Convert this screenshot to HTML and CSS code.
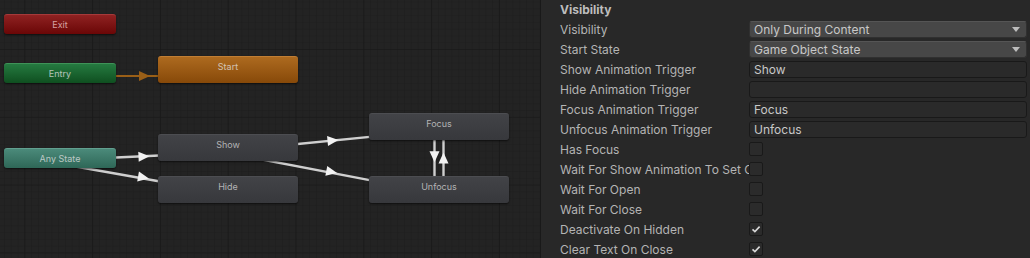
FILE: index.html
```html
<!DOCTYPE html>
<html lang="en">
<head>
    <meta charset="UTF-8">
    <title>Animator - Visibility</title>
    <link rel="stylesheet" href="styles.css">
</head>
<body>
    <div class="window">
        <div class="graph">
            <svg class="graph-lines" width="540" height="258" viewBox="0 0 540 258">
                <defs>
                    <pattern id="minor" width="6.78" height="6.78" x="24.3" y="-18.8" patternUnits="userSpaceOnUse">
                        <path d="M0 0 V6.78 M0 0 H6.78" stroke="#1d1d1d" stroke-width="1" fill="none"/>
                    </pattern>
                    <pattern id="major" width="67.8" height="67.8" x="24.3" y="-18.8" patternUnits="userSpaceOnUse">
                        <path d="M0 0 V67.8 M0 0 H67.8" stroke="#171717" stroke-width="1.2" fill="none"/>
                    </pattern>
                </defs>
                <rect width="540" height="258" fill="#232323"/>
                <rect width="540" height="258" fill="url(#minor)"/>
                <rect width="540" height="258" fill="url(#major)"/>

                <!-- transitions -->
                <line x1="100" y1="76" x2="170" y2="76" stroke="#9a5f17" stroke-width="2.2"/>
                <g stroke="#cfcfcf" stroke-width="2.4">
                    <line x1="100" y1="158.3" x2="170" y2="155"/>
                    <line x1="60" y1="163.7" x2="170" y2="183.2"/>
                    <line x1="280" y1="145.8" x2="380" y2="135.9"/>
                    <line x1="250" y1="157.2" x2="380" y2="182.1"/>
                    <line x1="434.5" y1="130" x2="434.5" y2="190"/>
                    <line x1="443.5" y1="130" x2="443.5" y2="190"/>
                </g>
                <polygon points="-5.5,-5 5.5,0 -5.5,5" fill="#9a5f17" transform="translate(144.5 76)"/>
                <g fill="#f2f2f2">
                    <polygon points="-5.5,-5 5.5,0 -5.5,5" transform="translate(144 156.6) rotate(-2.7)"/>
                    <polygon points="-5.5,-5 5.5,0 -5.5,5" transform="translate(143.5 177.5) rotate(10.1)"/>
                    <polygon points="-5.5,-5 5.5,0 -5.5,5" transform="translate(333 140.5) rotate(-5.6)"/>
                    <polygon points="-5.5,-5 5.5,0 -5.5,5" transform="translate(331.7 172) rotate(10.9)"/>
                    <polygon points="-5.5,-5 5.5,0 -5.5,5" transform="translate(434.5 156.7) rotate(90)"/>
                    <polygon points="-5.5,-5 5.5,0 -5.5,5" transform="translate(443.5 158) rotate(-90)"/>
                </g>
            </svg>

            <div class="node node-exit" style="left: 4px; top: 14px; width: 112px; height: 20px;">Exit</div>
            <div class="node node-entry" style="left: 4px; top: 63px; width: 112px; height: 20px;">Entry</div>
            <div class="node node-start" style="left: 158px; top: 56px; width: 140px; height: 27px;">Start</div>
            <div class="node node-any" style="left: 4px; top: 148px; width: 112px; height: 20px;">Any State</div>
            <div class="node node-state" style="left: 158px; top: 134px; width: 140px; height: 27px;">Show</div>
            <div class="node node-state" style="left: 158px; top: 176px; width: 140px; height: 27px;">Hide</div>
            <div class="node node-state" style="left: 369px; top: 113px; width: 140px; height: 27px;">Focus</div>
            <div class="node node-state" style="left: 369px; top: 176px; width: 140px; height: 27px;">Unfocus</div>
        </div>

        <div class="inspector">
            <div class="row header">Visibility</div>
            <div class="row">
                <div class="label">Visibility</div>
                <div class="dropdown"><span>Only During Content</span><i class="caret"></i></div>
            </div>
            <div class="row">
                <div class="label">Start State</div>
                <div class="dropdown"><span>Game Object State</span><i class="caret"></i></div>
            </div>
            <div class="row">
                <div class="label">Show Animation Trigger</div>
                <div class="text-field">Show</div>
            </div>
            <div class="row">
                <div class="label">Hide Animation Trigger</div>
                <div class="text-field"></div>
            </div>
            <div class="row">
                <div class="label">Focus Animation Trigger</div>
                <div class="text-field">Focus</div>
            </div>
            <div class="row">
                <div class="label">Unfocus Animation Trigger</div>
                <div class="text-field">Unfocus</div>
            </div>
            <div class="row">
                <div class="label">Has Focus</div>
                <div class="checkbox"></div>
            </div>
            <div class="row">
                <div class="label">Wait For Show Animation To Set Content</div>
                <div class="checkbox"></div>
            </div>
            <div class="row">
                <div class="label">Wait For Open</div>
                <div class="checkbox"></div>
            </div>
            <div class="row">
                <div class="label">Wait For Close</div>
                <div class="checkbox"></div>
            </div>
            <div class="row">
                <div class="label">Deactivate On Hidden</div>
                <div class="checkbox checked">
                    <svg width="12" height="12" viewBox="0 0 12 12"><path d="M2.5 6.3 L4.9 8.6 L9.6 3.6" stroke="#d8d8d8" stroke-width="1.6" fill="none"/></svg>
                </div>
            </div>
            <div class="row">
                <div class="label">Clear Text On Close</div>
                <div class="checkbox checked">
                    <svg width="12" height="12" viewBox="0 0 12 12"><path d="M2.5 6.3 L4.9 8.6 L9.6 3.6" stroke="#d8d8d8" stroke-width="1.6" fill="none"/></svg>
                </div>
            </div>
        </div>
    </div>
</body>
</html>
```

FILE: styles.css
```css
* {
    margin: 0;
    padding: 0;
    box-sizing: border-box;
}

body {
    font-family: Inter, 'Noto Sans', 'Liberation Sans', sans-serif;
    background: #282828;
    color: #b4b4b4;
    width: 1030px;
    height: 258px;
    overflow: hidden;
}

.window {
    display: flex;
    height: 258px;
}

/* 状态机画布 */
.graph {
    position: relative;
    width: 540px;
    height: 258px;
    overflow: hidden;
    flex-shrink: 0;
}

.graph-lines {
    position: absolute;
    left: 0;
    top: 0;
}

.node {
    position: absolute;
    border-radius: 3px;
    font-size: 9px;
    line-height: 20px;
    text-align: center;
    color: rgba(225, 225, 225, 0.78);
    box-shadow: 0 1px 2px rgba(0, 0, 0, 0.6);
}

.node-exit {
    background: linear-gradient(#8f2222, #6a0606);
    border-top: 1px solid #a53a3a;
    line-height: 19px;
    color: rgba(235, 200, 200, 0.8);
}

.node-entry {
    background: linear-gradient(#257a40, #0f4f20);
    border-top: 1px solid #3f9258;
    line-height: 19px;
}

.node-start {
    background: linear-gradient(#ad6a1f, #874909);
    border-top: 1px solid #c07e34;
    line-height: 19px;
}

.node-any {
    background: linear-gradient(#4b8a7a, #2e6757);
    border-top: 1px solid #62a090;
    line-height: 19px;
}

.node-state {
    background: linear-gradient(#424347, #37383c);
    border-top: 1px solid #4c4d51;
    line-height: 19px;
    color: rgba(210, 210, 210, 0.8);
}

/* 检查器面板 */
.inspector {
    flex: 1;
    background: #282828;
    border-left: 1px solid #191919;
    font-size: 12px;
}

.row {
    display: flex;
    align-items: flex-start;
    height: 20px;
    line-height: 20px;
}

.header {
    padding-left: 19px;
    font-weight: 700;
    color: #bdbdbd;
}

.label {
    width: 208px;
    padding-left: 19px;
    padding-right: 2px;
    white-space: nowrap;
    overflow: hidden;
    flex-shrink: 0;
}

.dropdown,
.text-field {
    width: 278px;
    height: 17px;
    margin-top: 1px;
    border-radius: 3px;
    padding-left: 4px;
    line-height: 15px;
    color: #c8c8c8;
}

.dropdown {
    display: flex;
    justify-content: space-between;
    align-items: center;
    background: #474747;
    border: 1px solid #303030;
    border-top-color: #555555;
}

.caret {
    width: 0;
    height: 0;
    margin-right: 6px;
    border-left: 4px solid transparent;
    border-right: 4px solid transparent;
    border-top: 5px solid #bdbdbd;
}

.text-field {
    background: #2a2a2a;
    border: 1px solid #191919;
}

.checkbox {
    width: 14px;
    height: 14px;
    margin-top: 2px;
    border-radius: 2px;
    background: #2b2b2b;
    border: 1px solid #191919;
    display: flex;
    align-items: center;
    justify-content: center;
}
```
